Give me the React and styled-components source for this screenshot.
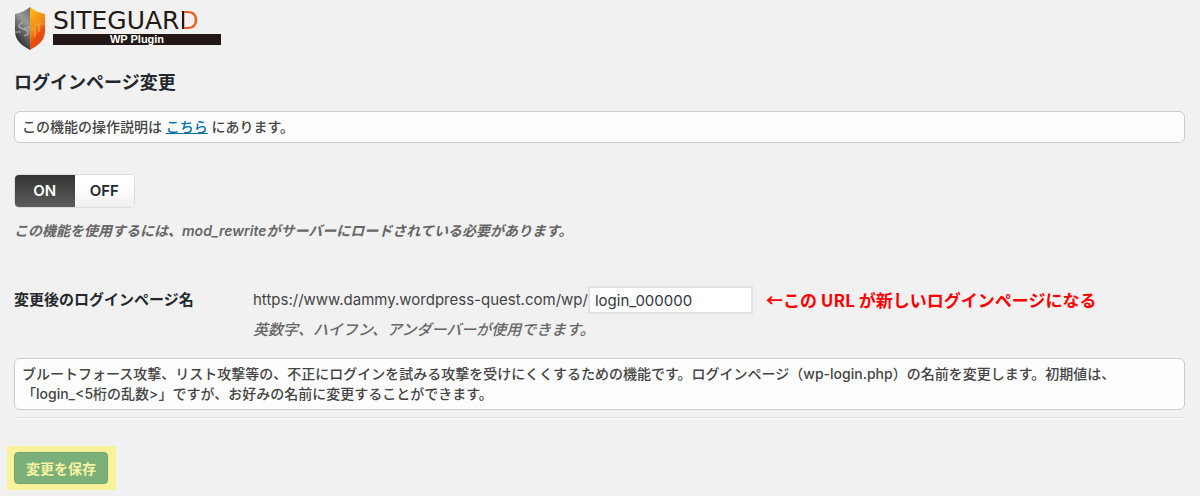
import React, { useState } from "react";
import styled, { createGlobalStyle } from "styled-components";

const GlobalStyle = createGlobalStyle`
  * {
    box-sizing: border-box;
  }
  body {
    margin: 0;
    background-color: #f1f1f1;
    color: #444;
    font-family: Inter, "Noto Sans CJK JP", sans-serif;
    font-size: 14px;
    line-height: 20px;
  }
`;

const Page = styled.main`
  padding: 5px 15px 7px 14px;
`;

const Logo = styled.div`
  display: flex;
  align-items: center;
  gap: 7px;
  height: 46px;
`;

const Brand = styled.div`
  width: 168px;
  padding-bottom: 4px;
`;

const BrandName = styled.div`
  color: #231815;
  font-family: "DejaVu Sans", sans-serif;
  font-size: 25px;
  line-height: 26px;
`;

const BrandLast = styled.span`
  color: transparent;
  background: linear-gradient(to right, #231815 5px, #e8541a 5px, #f0641e);
  background-clip: text;
`;

const BrandBar = styled.div`
  background-color: #231815;
  color: #fff;
  font-family: "Liberation Sans", sans-serif;
  font-size: 11px;
  font-weight: bold;
  line-height: 11px;
  text-align: center;
`;

const Title = styled.h2`
  margin: 19px 0 15px;
  color: #23282d;
  font-size: 18px;
  font-weight: bold;
  line-height: 26px;
`;

const NoteBox = styled.div`
  padding: 5px 7px;
  border: 1px solid #ccc;
  border-radius: 6px;
  background-color: #fdfdfd;
  font-weight: 500;
`;

const NoteLink = styled.a`
  color: #0073aa;
`;

const Switch = styled.div`
  display: flex;
  width: 121px;
  height: 34px;
  margin: 31px 0 13px;
  border: 1px solid #ddd;
  border-radius: 5px;
  overflow: hidden;
`;

const SwitchInput = styled.input`
  position: absolute;
  opacity: 0;
`;

const SwitchLabel = styled.label`
  flex: 1;
  color: ${({ $on }) => ($on ? "#fff" : "#23282d")};
  background: ${({ $on }) =>
    $on
      ? "linear-gradient(#333, #5c5c5c)"
      : "linear-gradient(#fff 40%, #efefef)"};
  font-size: 15px;
  font-weight: 600;
  line-height: 32px;
  text-align: center;
`;

const Hint = styled.p`
  margin: 0;
  color: #666;
  font-size: ${({ $small }) => ($small ? "14px" : "15px")};
  font-style: italic;
  font-weight: ${({ $small }) => ($small ? 600 : 500)};
`;

const Row = styled.div`
  display: grid;
  grid-template-columns: 239px 1fr;
  margin: 45px 0 18px;
`;

const RowLabel = styled.label`
  color: #23282d;
  font-size: 15px;
  font-weight: bold;
  line-height: 28px;
`;

const Field = styled.div`
  display: flex;
  align-items: center;
  margin-bottom: 6px;
  font-size: 15px;
`;

const NameInput = styled.input`
  width: 165px;
  height: 28px;
  padding: 0 5px;
  border: 2px solid #e3e3e3;
  background-color: #fff;
  color: #32373c;
  font-family: inherit;
  font-size: 15px;
`;

const Callout = styled.strong`
  margin-left: 13px;
  color: #f00;
  font-family: "Noto Sans CJK JP", sans-serif;
  font-size: 17px;
`;

const Divider = styled.hr`
  margin: 7px 0 27px;
  border: 0;
  border-top: 1px solid #ddd;
  border-bottom: 1px solid #fafafa;
`;

const Highlight = styled.div`
  width: fit-content;
  margin-left: -7px;
  padding: 6px 8px 6px 7px;
  background-color: #f9f299;
`;

const SaveButton = styled.button`
  display: block;
  height: 32px;
  padding: 0 11px;
  border: 1px solid #6da36e;
  border-radius: 4px;
  background-color: #7cb07b;
  color: #f6f3a0;
  font-family: inherit;
  font-size: 14px;
  font-weight: 600;
`;

const Shield = () => (
  <svg width="32" height="44" viewBox="0 0 32 44" aria-hidden="true">
    <defs>
      <linearGradient id="steel" x1="0.7" y1="0" x2="0.3" y2="1">
        <stop offset="0" stopColor="#777" />
        <stop offset="0.3" stopColor="#999" />
        <stop offset="0.55" stopColor="#666" />
        <stop offset="1" stopColor="#1c1a1a" />
      </linearGradient>
      <linearGradient id="flame" x1="0.3" y1="0" x2="0.7" y2="1">
        <stop offset="0" stopColor="#f9b517" />
        <stop offset="0.45" stopColor="#f08a13" />
        <stop offset="0.65" stopColor="#e94f0e" />
        <stop offset="1" stopColor="#e8460c" />
      </linearGradient>
    </defs>
    <path d="M16 1C11 5 6 7 1 8v17c0 9 6 14 15 19z" fill="url(#steel)" />
    <path d="M16 1c5 4 10 6 15 7v17c0 9-6 14-15 19z" fill="url(#flame)" />
    <path
      d="M9 16l-4 3v2l9 4v3l-4 2M1 26h6M10 22h6"
      fill="none"
      stroke="#b4b4b4"
      strokeWidth="1.2"
    />
    <path
      d="M16 23h5v8M21 20l2-2h8M25 18v8"
      fill="none"
      stroke="#f6a052"
      strokeWidth="1.2"
    />
  </svg>
);

const App = () => {
  const [enabled, setEnabled] = useState(true);
  const [name, setName] = useState("login_000000");

  return (
    <>
      <GlobalStyle />
      <Page>
        <Logo>
          <Shield />
          <Brand>
            <BrandName>
              SITEGUAR<BrandLast>D</BrandLast>
            </BrandName>
            <BrandBar>WP Plugin</BrandBar>
          </Brand>
        </Logo>

        <Title>ログインページ変更</Title>
        <NoteBox>
          この機能の操作説明は <NoteLink href="#help">こちら</NoteLink>{" "}
          にあります。
        </NoteBox>

        <Switch>
          <SwitchLabel $on={enabled}>
            <SwitchInput
              type="radio"
              name="enable"
              checked={enabled}
              onChange={() => setEnabled(true)}
            />
            ON
          </SwitchLabel>
          <SwitchLabel $on={!enabled}>
            <SwitchInput
              type="radio"
              name="enable"
              checked={!enabled}
              onChange={() => setEnabled(false)}
            />
            OFF
          </SwitchLabel>
        </Switch>
        <Hint $small>
          この機能を使用するには、mod_rewriteがサーバーにロードされている必要があります。
        </Hint>

        <Row>
          <RowLabel htmlFor="login-name">変更後のログインページ名</RowLabel>
          <div>
            <Field>
              <span>https://www.dammy.wordpress-quest.com/wp/</span>
              <NameInput
                id="login-name"
                type="text"
                value={name}
                onChange={(e) => setName(e.target.value)}
              />
              <Callout>←この URL が新しいログインページになる</Callout>
            </Field>
            <Hint>英数字、ハイフン、アンダーバーが使用できます。</Hint>
          </div>
        </Row>

        <NoteBox>
          ブルートフォース攻撃、リスト攻撃等の、不正にログインを試みる攻撃を受けにくくするための機能です。ログインページ（wp-login.php）の名前を変更します。初期値は、
          <br />
          「login_&lt;5桁の乱数&gt;」ですが、お好みの名前に変更することができます。
        </NoteBox>
        <Divider />

        <Highlight>
          <SaveButton type="button">変更を保存</SaveButton>
        </Highlight>
      </Page>
    </>
  );
};

export default App;
